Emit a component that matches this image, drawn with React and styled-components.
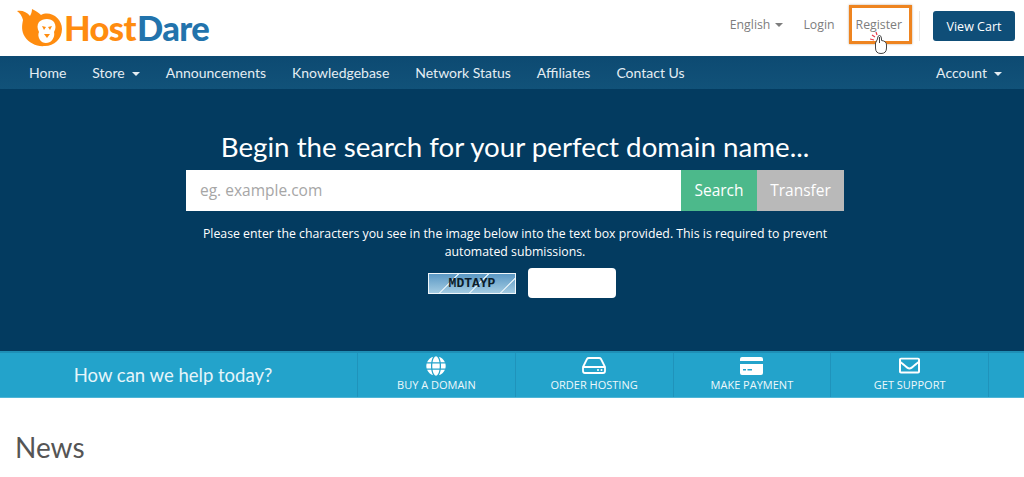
import React from 'react';
import styled, { createGlobalStyle } from 'styled-components';
import { FaGlobe, FaRegEnvelope } from 'react-icons/fa';

const GlobalStyle = createGlobalStyle`
  html, body {
    margin: 0;
    padding: 0;
    background: #fff;
    font-family: "Open Sans", sans-serif;
    overflow: hidden;
  }
`

const Page = styled.div`
  width: 1024px;
  height: 477px;
  overflow: hidden;
`

const TopBar = styled.header`
  height: 56px;
  box-sizing: border-box;
  display: flex;
  align-items: center;
  justify-content: space-between;
  padding: 0 9px 4px 17px;
`

const Logo = styled.a`
  display: flex;
  align-items: flex-end;
  height: 38px;
  margin-top: 4px;
`

const LogoText = styled.span`
  font-family: "Lato", sans-serif;
  font-weight: 900;
  font-size: 34.5px;
  line-height: 38px;
  letter-spacing: -0.6px;
  margin-left: ${props => props.gap}px;
  color: ${props => props.color};
`

const TopLinks = styled.div`
  display: flex;
  align-items: center;
  font-size: 12.3px;
  color: #7d7d7d;
`

const TopLink = styled.a`
  position: relative;
  display: flex;
  align-items: center;
  margin-left: ${props => props.gap}px;
  margin-top: -4px;
`

const Highlight = styled.span`
  position: absolute;
  left: -7px;
  top: -11px;
  width: 57px;
  height: 33px;
  border: 3px solid #ee8420;
  box-shadow: 0 0 2px rgba(120, 80, 30, 0.5);
`

const Pointer = styled.svg`
  position: absolute;
  left: 14px;
  top: 15px;
`

const Caret = styled.span`
  display: inline-block;
  margin-left: ${props => props.gap}px;
  margin-top: 2px;
  border-top: 4px solid ${props => props.color};
  border-left: 4px solid transparent;
  border-right: 4px solid transparent;
`

const Divider = styled.span`
  width: 1px;
  height: 30px;
  background: #e8e8e8;
  margin: 0 13px 0 17px;
`

const CartButton = styled.a`
  display: flex;
  align-items: center;
  justify-content: center;
  width: 82px;
  height: 30px;
  background: #0f4e78;
  border-radius: 3px;
  color: #fff;
  font-size: 12.5px;
`

const Nav = styled.nav`
  height: 33px;
  background: linear-gradient(#0d4a72, #115279);
  display: flex;
  align-items: center;
  justify-content: space-between;
  padding: 0 22px 0 29px;
  font-family: "Lato", sans-serif;
  font-size: 14px;
  color: #e4edf3;
`

const NavGroup = styled.div`
  display: flex;
  align-items: center;
  gap: 26px;
`

const NavItem = styled.a`
  display: flex;
  align-items: center;
`

const Hero = styled.section`
  height: 262px;
  background: #033b60;
  display: flex;
  flex-direction: column;
  align-items: center;
  padding: 41px 0 0 6px;
  box-sizing: border-box;
  color: #fff;
`

const HeroTitle = styled.h1`
  margin: 0;
  height: 40px;
  line-height: 34px;
  font-family: "Lato", sans-serif;
  font-size: 27.7px;
  font-weight: 400;
`

const SearchForm = styled.div`
  display: flex;
  width: 658px;
  height: 41px;
  font-size: 15.5px;
`

const SearchInput = styled.div`
  flex: 1;
  background: #fff;
  color: #a6a6a6;
  padding-left: 14px;
  line-height: 41px;
`

const SearchButton = styled.div`
  width: ${props => props.width}px;
  background: ${props => props.bg};
  text-align: center;
  line-height: 41px;
`

const Notice = styled.p`
  margin: 14px 0 0;
  width: 658px;
  text-align: center;
  font-size: 12.3px;
  line-height: 18px;
`

const CaptchaRow = styled.div`
  display: flex;
  align-items: center;
  gap: 12px;
  margin: 7px 0 0 14px;
`

const CaptchaImage = styled.div`
  width: 88px;
  height: 21px;
  box-sizing: border-box;
  border: 1px solid #f0f6fa;
  background:
    repeating-linear-gradient(135deg, transparent 0 20px, #d5e8f2 20px 21.5px),
    linear-gradient(#5b98c4, #a3cbe2);
  color: #0c1c2a;
  font-family: "Liberation Mono", monospace;
  font-size: 13px;
  font-weight: 700;
  line-height: 19px;
  text-align: center;
`

const CaptchaInput = styled.div`
  width: 88px;
  height: 30px;
  background: #fff;
  border-radius: 4px;
`

const HelpBar = styled.section`
  height: 47px;
  background: #23a3cb;
  border-top: 2px solid #1f8fb6;
  border-bottom: 1px solid #4fb5d6;
  box-sizing: border-box;
  display: grid;
  grid-template-columns: 357px repeat(4, 157.75px) 1fr;
  color: #fff;
`

const HelpTitle = styled.div`
  display: flex;
  align-items: center;
  justify-content: center;
  font-family: "Lato", sans-serif;
  font-size: 18.5px;
  color: #e6f5fa;
  padding-right: 11px;
`

const Tile = styled.a`
  display: flex;
  flex-direction: column;
  align-items: center;
  border-left: 1px solid #1f93bb;
  font-size: 11px;
  line-height: 16px;
  color: #eef8fb;
`

const TileIcon = styled.div`
  height: 21px;
  display: flex;
  align-items: center;
  justify-content: center;
  margin-top: 2px;
  margin-bottom: 1px;
`

const LastEdge = styled.div`
  border-left: 1px solid #1f93bb;
`

const News = styled.h2`
  margin: 33px 0 0 15px;
  font-family: "Lato", sans-serif;
  font-size: 28px;
  line-height: 32px;
  font-weight: 400;
  color: #555;
`

function LionLogo() {
    return (
        <svg width="46" height="38" viewBox="0 0 46 38">
            <path fill="#ff8c0f" d="M0 2 C5 1 10 3 13 7 C14 5 15 3 15 0 C19 2 22 4 24 6 C33 1 45 9 45 20 C45 30 37 37 28 37 C20 38 12 34 8 28 C4 22 5 16 6 11 C5 7 3 4 0 2Z" />
            <path fill="#fff" d="M22 13 C26 9 34 9 37 13 C39 16 39 20 37 23 C38 27 36 31 33 33 C29 35 25 34 23 31 C21 28 21 25 22 23 C20 19 20 16 22 13Z" />
            <path fill="#ff8c0f" d="M25 17 L29 18 L27 21Z M35 17 L31 18 L33 21Z M27 25 L33 25 L30 29Z" />
        </svg>
    )
}

function ServerIcon() {
    return (
        <svg width="24" height="17" viewBox="0 0 24 17" fill="none">
            <path stroke="#fff" strokeWidth="1.8" d="M1 10 L5 2 Q5.500 1 7 1 H17 Q18.500 1 19 2 L23 10 V14 Q23 16 21 16 H3 Q1 16 1 14Z M1 10 H23" />
            <circle cx="16" cy="13" r="1" fill="#fff" />
            <circle cx="19.500" cy="13" r="1" fill="#fff" />
        </svg>
    )
}

function CardIcon() {
    return (
        <svg width="23" height="18" viewBox="0 0 23 18">
            <path fill="#fff" d="M2 0 H21 Q23 0 23 2 V4 H0 V2 Q0 0 2 0Z M0 7 H23 V16 Q23 18 21 18 H2 Q0 18 0 16Z" />
            <path fill="#23a3cb" d="M3 12 H6 V13.500 H3Z M7.500 12 H12 V13.500 H7.500Z" />
        </svg>
    )
}

function HandCursor() {
    return (
        <Pointer width="20" height="24" viewBox="0 0 20 24" fill="none">
            <path stroke="#e8394a" strokeWidth="1.2" d="M2 4 L5 6 M0 8 L4 9 M6 1 L7 4" />
            <path fill="#fff" stroke="#444" strokeWidth="1" d="M7.500 8 Q7.500 4.500 9.500 4.500 Q11.500 4.500 11.500 8 V9.500 Q16.500 10 16.500 14 V17 Q16.500 22.500 11 22.500 Q5.500 22.500 5.500 17 V12 Z" />
            <path fill="#444" d="M9 6 H10 V12 H9Z" />
        </Pointer>
    )
}

export default function App() {
    return (
        <Page>
            <GlobalStyle />
            <TopBar>
                <Logo>
                    <LionLogo />
                    <LogoText color="#ff8c0f" gap={1}>Host</LogoText>
                    <LogoText color="#2273ac" gap={1}>Dare</LogoText>
                </Logo>
                <TopLinks>
                    <TopLink>English<Caret gap={5} color="#7d7d7d" /></TopLink>
                    <TopLink gap={20}>Login</TopLink>
                    <TopLink gap={21}>
                        Register
                        <Highlight />
                        <HandCursor />
                    </TopLink>
                    <Divider />
                    <CartButton>View Cart</CartButton>
                </TopLinks>
            </TopBar>
            <Nav>
                <NavGroup>
                    <NavItem>Home</NavItem>
                    <NavItem>Store<Caret gap={7} color="#e4edf3" /></NavItem>
                    <NavItem>Announcements</NavItem>
                    <NavItem>Knowledgebase</NavItem>
                    <NavItem>Network Status</NavItem>
                    <NavItem>Affiliates</NavItem>
                    <NavItem>Contact Us</NavItem>
                </NavGroup>
                <NavItem>Account<Caret gap={7} color="#e4edf3" /></NavItem>
            </Nav>
            <Hero>
                <HeroTitle>Begin the search for your perfect domain name...</HeroTitle>
                <SearchForm>
                    <SearchInput>eg. example.com</SearchInput>
                    <SearchButton width={76} bg="#4cb98b">Search</SearchButton>
                    <SearchButton width={87} bg="#b9b9b9">Transfer</SearchButton>
                </SearchForm>
                <Notice>Please enter the characters you see in the image below into the text box provided. This is required to prevent automated submissions.</Notice>
                <CaptchaRow>
                    <CaptchaImage>MDTAYP</CaptchaImage>
                    <CaptchaInput />
                </CaptchaRow>
            </Hero>
            <HelpBar>
                <HelpTitle>How can we help today?</HelpTitle>
                <Tile>
                    <TileIcon><FaGlobe size={20} color="#fff" /></TileIcon>
                    BUY A DOMAIN
                </Tile>
                <Tile>
                    <TileIcon><ServerIcon /></TileIcon>
                    ORDER HOSTING
                </Tile>
                <Tile>
                    <TileIcon><CardIcon /></TileIcon>
                    MAKE PAYMENT
                </Tile>
                <Tile>
                    <TileIcon><FaRegEnvelope size={21} color="#fff" /></TileIcon>
                    GET SUPPORT
                </Tile>
                <LastEdge />
            </HelpBar>
            <News>News</News>
        </Page>
    )
}
